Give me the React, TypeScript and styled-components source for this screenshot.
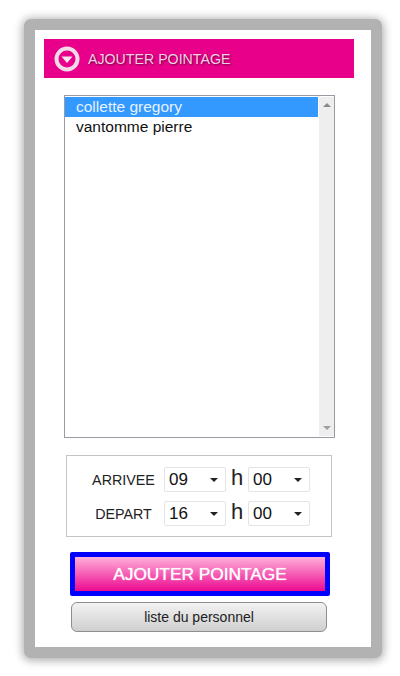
import React, { FC } from 'react';
import styled, { createGlobalStyle } from 'styled-components';

const Global = createGlobalStyle`
  html, body {
    margin: 0;
    padding: 0;
    background: #fff;
    font-family: 'Liberation Sans', Arial, sans-serif;
  }
`;

const Page = styled.div`
  width: 400px;
  height: 676px;
  box-sizing: border-box;
  padding: 19px 18px 18px 24px;
  overflow: hidden;
`;

const Frame = styled.div`
  width: 358px;
  height: 639px;
  box-sizing: border-box;
  border: 11px solid #b2b2b2;
  border-radius: 7px;
  background: #fff;
  box-shadow: 0 1px 9px 2px rgba(0, 0, 0, 0.3);
  padding: 9px 17px 0 9px;
`;

const Header = styled.div`
  height: 39px;
  background: #e9008a;
  display: flex;
  align-items: center;
  padding-left: 10px;
  gap: 8px;
  color: #f0cfe2;
  font-size: 14.2px;
  text-shadow: 1px 1px 2px rgba(90, 0, 50, 0.85);
`;

const Toggle = styled.svg`
  width: 26px;
  height: 26px;
  flex: none;
`;

const ListBox = styled.div`
  width: 271px;
  height: 343px;
  box-sizing: border-box;
  margin: 17px 0 0 20px;
  border: 1px solid #9a9aa2;
  padding: 1px 0;
  display: flex;
  background: #fff;
`;

const Options = styled.div`
  flex: 1;
  font-size: 15.5px;
  color: #111;
`;

const Option = styled.div<{ $selected?: boolean }>`
  height: 20px;
  line-height: 20px;
  padding-left: 11px;
  background: ${(p) => (p.$selected ? '#3399ff' : 'transparent')};
  color: ${(p) => (p.$selected ? '#e6f2ff' : '#111')};
`;

const ScrollBar = styled.div`
  width: 15px;
  margin-left: 1px;
  background: #eeeeee;
  display: flex;
  flex-direction: column;
  justify-content: space-between;
  align-items: center;
  padding: 6px 0;
  box-sizing: border-box;
`;

const Arrow = styled.div<{ $up?: boolean }>`
  width: 0;
  height: 0;
  border-left: 4px solid transparent;
  border-right: 4px solid transparent;
  ${(p) => (p.$up ? 'border-bottom: 4px solid #8a8a8a;' : 'border-top: 4px solid #a0a0a0;')}
`;

const TimeBox = styled.div`
  width: 266px;
  height: 82px;
  box-sizing: border-box;
  margin: 17px 0 0 22px;
  border: 1px solid #c4c4c4;
  padding: 11px 0 0 0;
  display: flex;
  flex-direction: column;
  gap: 9px;
`;

const TimeRow = styled.div`
  display: flex;
  align-items: center;
  height: 25px;
`;

const TimeLabel = styled.span`
  width: 97px;
  box-sizing: border-box;
  padding-left: 16px;
  text-align: center;
  font-size: 14.3px;
  color: #222;
`;

const FakeSelect = styled.div`
  width: 62px;
  height: 25px;
  box-sizing: border-box;
  border: 1px solid #e4e4e8;
  border-radius: 2px;
  display: flex;
  align-items: center;
  justify-content: space-between;
  padding: 0 7px 0 4px;
  font-size: 17px;
  color: #111;
`;

const Caret = styled.div`
  width: 0;
  height: 0;
  border-left: 4px solid transparent;
  border-right: 4px solid transparent;
  border-top: 4px solid #222;
`;

const H = styled.span`
  width: 22px;
  text-align: center;
  font-size: 22px;
  line-height: 20px;
  margin-top: -3px;
  color: #222;
`;

const MainButton = styled.div`
  width: 260px;
  height: 44px;
  box-sizing: border-box;
  margin: 15px 0 0 26px;
  border: 5px solid #0000ff;
  border-radius: 2px;
  background: linear-gradient(#ffb0da, #ec0a8f);
  color: #fff;
  font-size: 17.3px;
  text-shadow: 0 0 1px #fff;
  display: flex;
  align-items: center;
  justify-content: center;
`;

const SecondaryButton = styled.div`
  width: 256px;
  height: 30px;
  box-sizing: border-box;
  margin: 6px 0 0 27px;
  border: 1px solid #8e8e8e;
  border-radius: 6px;
  background: linear-gradient(#f2f2f2, #cfcfcf);
  color: #222;
  font-size: 14px;
  display: flex;
  align-items: center;
  justify-content: center;
`;

const Select: FC<{ value: string }> = ({ value }) => (
  <FakeSelect>
    {value}
    <Caret />
  </FakeSelect>
);

const App: FC = () => (
  <Page>
    <Global />
    <Frame>
      <Header>
        <Toggle viewBox="0 0 26 26">
          <circle cx="13" cy="13" r="10.5" fill="none" stroke="#f2dbe8" strokeWidth="4" />
          <path d="M7.5 10.5h11L13 17z" fill="#f7e6ef" />
        </Toggle>
        AJOUTER POINTAGE
      </Header>
      <ListBox>
        <Options>
          <Option $selected>collette gregory</Option>
          <Option>vantomme pierre</Option>
        </Options>
        <ScrollBar>
          <Arrow $up />
          <Arrow />
        </ScrollBar>
      </ListBox>
      <TimeBox>
        <TimeRow>
          <TimeLabel>ARRIVEE</TimeLabel>
          <Select value="09" />
          <H>h</H>
          <Select value="00" />
        </TimeRow>
        <TimeRow>
          <TimeLabel>DEPART</TimeLabel>
          <Select value="16" />
          <H>h</H>
          <Select value="00" />
        </TimeRow>
      </TimeBox>
      <MainButton>AJOUTER POINTAGE</MainButton>
      <SecondaryButton>liste du personnel</SecondaryButton>
    </Frame>
  </Page>
);

export default App;
